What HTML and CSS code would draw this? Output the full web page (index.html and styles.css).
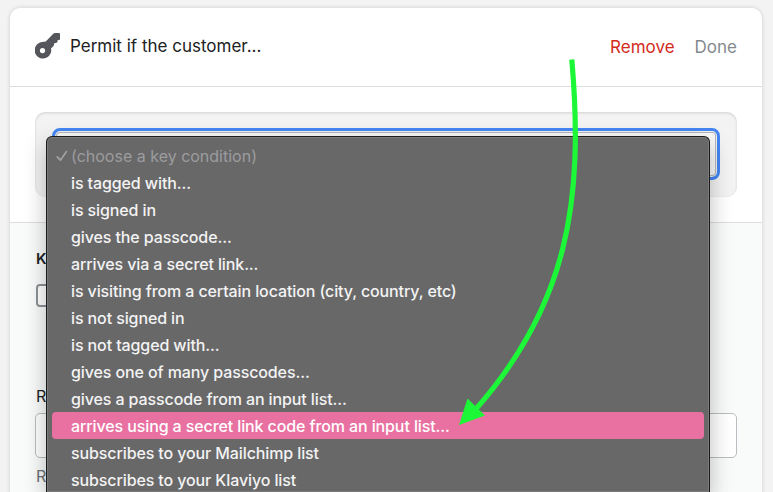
FILE: index.html
```
<!DOCTYPE html>
<html lang="en">
<head>
<meta charset="utf-8">
<title>Permit condition</title>
<link rel="stylesheet" href="styles.css">
</head>
<body>
<main class="card">
  <header class="card-header">
    <svg class="key-icon" width="26" height="26" viewBox="0 0 26 26">
      <path fill="#55565b" fill-rule="evenodd" d="M18.500 .6Q19.200 0 20 0H24Q25 0 25 1V6Q25 7 24 7H23.200Q22.500 7 22.500 7.800V8.500Q22.500 9.500 21.500 9.800L19 10.500V11.800Q19 12.600 18.300 13.200L16 15.500Q17 19.200 14.500 22.300A8.300 8.300 0 1 1 7 9Q9 8.700 10.800 8.600ZM7.500 15A2.600 2.600 0 1 0 7.500 20.200A2.600 2.600 0 0 0 7.500 15Z"/>
    </svg>
    <h1 class="title">Permit if the customer...</h1>
    <span class="remove">Remove</span>
    <span class="done">Done</span>
  </header>
  <section class="condition">
    <div class="panel"><div class="select"></div></div>
  </section>
  <section class="details">
    <div class="label label-strong">K</div>
    <div class="checkbox"></div>
    <div class="label label-field">R</div>
    <div class="input"></div>
    <div class="help">R</div>
  </section>
</main>
<ul class="menu">
  <li class="placeholder"><svg class="check" width="12" height="12" viewBox="0 0 12 12"><path d="M1.200 6.800L4.400 10.200L10.500 1.600" fill="none" stroke="#a2a2a4" stroke-width="1.700" stroke-linecap="round" stroke-linejoin="round"/></svg>(choose a key condition)</li>
  <li>is tagged with...</li>
  <li>is signed in</li>
  <li>gives the passcode...</li>
  <li>arrives via a secret link...</li>
  <li>is visiting from a certain location (city, country, etc)</li>
  <li>is not signed in</li>
  <li>is not tagged with...</li>
  <li>gives one of many passcodes...</li>
  <li>gives a passcode from an input list...</li>
  <li class="active">arrives using a secret link code from an input list...</li>
  <li>subscribes to your Mailchimp list</li>
  <li>subscribes to your Klaviyo list</li>
</ul>
<svg class="arrow" width="773" height="492" viewBox="0 0 773 492">
  <path d="M571.800 59.500C584 200 568 305 475 410" fill="none" stroke="#1cf838" stroke-width="5.200"/>
  <path d="M459 425L467.500 398.500L485 415.500Z" fill="#1cf838"/>
</svg>
</body>
</html>
```

FILE: styles.css
```
* { box-sizing: border-box; }
body {
  margin: 0;
  padding: 8px 11px 0 10px;
  height: 492px;
  overflow: hidden;
  background: #f3f3f3;
  font-family: Inter, "Liberation Sans", sans-serif;
  font-size: 16px;
  color: #202223;
}
.card {
  height: 500px;
  background: #fff;
  border-radius: 10px 10px 0 0;
  box-shadow: 0 0 4px rgba(0, 0, 0, .16);
  overflow: hidden;
}
.card-header {
  display: flex;
  align-items: center;
  height: 79px;
  padding: 0 25px 2px 25px;
  border-bottom: 1px solid #dcdddf;
  font-size: 17px;
}
.key-icon { flex: none; margin-right: 9px; }
.title { margin: 0; flex: 1; font-size: 17px; font-weight: 400; }
.remove, .done { padding-top: 2px; }
.remove { color: #d42b1e; margin-right: 20px; }
.done { color: #85898e; }
.condition {
  height: 136px;
  padding: 25px;
  border-bottom: 1px solid #dcdddf;
}
.panel {
  height: 85px;
  padding: 16px 17px;
  border-radius: 10px;
  background: #f3f3f3;
  box-shadow: inset 0 1px 3px rgba(0, 0, 0, .14);
}
.select {
  height: 52px;
  border: 3px solid #4486f4;
  border-radius: 8px;
  background: #fafafa;
  box-shadow: inset 0 0 0 1px #f4f4f4, inset 0 0 0 2px #b4b6ba;
}
.details { height: 285px; padding: 26px 25px 0; background: #f9fbfa; }
.label { margin-left: 1px; height: 20px; line-height: 20px; }
.label-strong { font-size: 15px; font-weight: 600; }
.checkbox {
  width: 23px;
  height: 23px;
  margin: 15px 0 0 1px;
  border: 2px solid #8c9196;
  border-radius: 4px;
  background: #fff;
}
.label-field { margin-top: 79px; }
.input {
  height: 45px;
  margin-top: 7px;
  border: 1px solid #b9bcc0;
  border-radius: 5px;
  background: #fff;
}
.help { margin: 8px 0 0 1px; line-height: 20px; color: #6d7175; }
.menu {
  position: absolute;
  left: 46px;
  top: 136px;
  width: 664px;
  height: 356px;
  margin: 0;
  padding: 5px 5px 0;
  list-style: none;
  border: 1px solid #1b1b1c;
  border-bottom: 0;
  border-radius: 6px 6px 0 0;
  background: #686869;
  box-shadow: inset 0 0 0 1px #7b7b7c, 0 8px 22px rgba(0, 0, 0, .27);
  overflow: hidden;
  color: #f3f3f3;
  font-weight: 500;
  letter-spacing: -.11px;
}
.menu li {
  height: 27px;
  line-height: 28px;
  padding-left: 19px;
  border-radius: 4px;
  white-space: nowrap;
}
.menu .placeholder {
  display: flex;
  align-items: center;
  padding-left: 4px;
  color: #9c9c9e;
  font-weight: 400;
  letter-spacing: 0;
}
.check { margin-right: 3px; }
.menu .active { background: #e871a2; color: #fff; }
.arrow { position: absolute; left: 0; top: 0; }
```
